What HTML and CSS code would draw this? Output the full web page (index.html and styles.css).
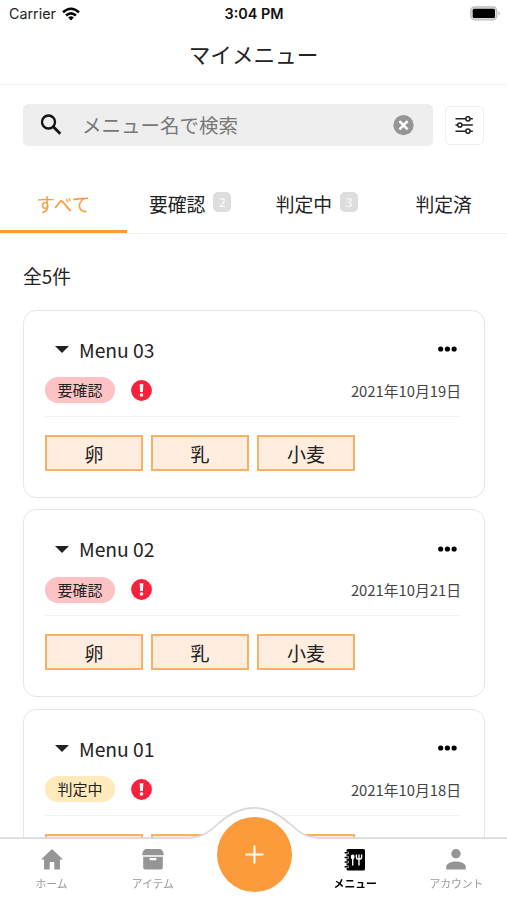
FILE: index.html
```html
<!DOCTYPE html>
<html lang="ja">

<head>
    <meta charset="utf-8">
    <title>マイメニュー</title>
    <link rel="stylesheet" href="styles.css">
</head>

<body>
    <div class="status">
        <div class="carrier">
            <span>Carrier</span>
            <svg width="18" height="14" viewBox="0 0 18 14">
                <g fill="none" stroke="#000" stroke-width="2.5">
                    <path d="M1 5.2Q9 -1.8 17 5.2" />
                    <path d="M4 8.5Q9 4.2 14 8.5" />
                </g>
                <path d="M6.2 10.4Q9 8.2 11.8 10.4L9 13.4z" />
            </svg>
        </div>
        <div class="time">3:04 PM</div>
        <div class="battery">
            <svg width="31" height="15" viewBox="0 0 31 15">
                <rect x=".8" y=".8" width="26" height="13" rx="4" fill="#ddd" stroke="#bbb" stroke-width="1.2" />
                <rect x="2.7" y="2.7" width="22.3" height="9.2" rx="1.5" />
                <path d="M28.5 5Q31 7.3 28.5 9.6z" fill="#b5b5b5" />
            </svg>
        </div>
    </div>

    <h1 class="title">マイメニュー</h1>

    <div class="search-row">
        <div class="search">
            <svg class="search-icon" width="22" height="22" viewBox="0 0 22 22" fill="none" stroke="#111" stroke-width="2.3">
                <circle cx="8.5" cy="8" r="6.5" />
                <path d="M13 12.5L20.3 19.8" stroke-width="2.8" />
            </svg>
            <span class="placeholder">メニュー名で検索</span>
            <svg width="21" height="21" viewBox="0 0 21 21">
                <circle cx="10.5" cy="10.2" r="10.1" fill="#959595" />
                <path d="M6.4 6.1L14.6 14.3M14.6 6.1L6.4 14.3" stroke="#fff" stroke-width="2.5" />
            </svg>
        </div>
        <div class="filter">
            <svg width="18" height="18" viewBox="0 0 18 18" fill="none" stroke="#222" stroke-width="1.5">
                <path d="M.5 2.8H10.5M15.2 2.8H17.8M.5 9H2.5M7.2 9H17.8M.5 15.2H10.5M15.2 15.2H17.8" />
                <circle cx="12.9" cy="2.8" r="2.1" />
                <circle cx="4.8" cy="9" r="2.1" />
                <circle cx="12.9" cy="15.2" r="2.1" />
            </svg>
        </div>
    </div>

    <div class="tabs">
        <div class="tab active">すべて</div>
        <div class="tab">要確認<span class="count">2</span></div>
        <div class="tab">判定中<span class="count">3</span></div>
        <div class="tab">判定済</div>
    </div>

    <div class="list">
        <p class="total">全5件</p>

        <div class="card">
            <div class="card-head">
                <span class="arrow"></span>
                <span class="name">Menu 03</span>
                <svg class="more" width="19" height="6" viewBox="0 0 19 6"><circle cx="2.7" cy="3" r="2.6" /><circle cx="9.4" cy="3" r="2.6" /><circle cx="16.1" cy="3" r="2.6" /></svg>
            </div>
            <div class="card-info">
                <span class="badge red">要確認</span>
                <svg class="alert" width="21" height="21" viewBox="0 0 21 21"><circle cx="10.5" cy="10.5" r="10.4" fill="#f8203b" /><path d="M8.7 4.2H12.3L11.9 12H9.1z" fill="#fff" /><circle cx="10.5" cy="15" r="1.8" fill="#fff" /></svg>
                <span class="date">2021年10月19日</span>
            </div>
            <div class="chips">
                <span class="chip">卵</span>
                <span class="chip">乳</span>
                <span class="chip">小麦</span>
            </div>
        </div>

        <div class="card">
            <div class="card-head">
                <span class="arrow"></span>
                <span class="name">Menu 02</span>
                <svg class="more" width="19" height="6" viewBox="0 0 19 6"><circle cx="2.7" cy="3" r="2.6" /><circle cx="9.4" cy="3" r="2.6" /><circle cx="16.1" cy="3" r="2.6" /></svg>
            </div>
            <div class="card-info">
                <span class="badge red">要確認</span>
                <svg class="alert" width="21" height="21" viewBox="0 0 21 21"><circle cx="10.5" cy="10.5" r="10.4" fill="#f8203b" /><path d="M8.7 4.2H12.3L11.9 12H9.1z" fill="#fff" /><circle cx="10.5" cy="15" r="1.8" fill="#fff" /></svg>
                <span class="date">2021年10月21日</span>
            </div>
            <div class="chips">
                <span class="chip">卵</span>
                <span class="chip">乳</span>
                <span class="chip">小麦</span>
            </div>
        </div>

        <div class="card">
            <div class="card-head">
                <span class="arrow"></span>
                <span class="name">Menu 01</span>
                <svg class="more" width="19" height="6" viewBox="0 0 19 6"><circle cx="2.7" cy="3" r="2.6" /><circle cx="9.4" cy="3" r="2.6" /><circle cx="16.1" cy="3" r="2.6" /></svg>
            </div>
            <div class="card-info">
                <span class="badge yellow">判定中</span>
                <svg class="alert" width="21" height="21" viewBox="0 0 21 21"><circle cx="10.5" cy="10.5" r="10.4" fill="#f8203b" /><path d="M8.7 4.2H12.3L11.9 12H9.1z" fill="#fff" /><circle cx="10.5" cy="15" r="1.8" fill="#fff" /></svg>
                <span class="date">2021年10月18日</span>
            </div>
            <div class="chips">
                <span class="chip"></span>
                <span class="chip"></span>
                <span class="chip"></span>
            </div>
        </div>
    </div>

    <div class="nav">
        <!-- bar with the bump round the add button -->
        <svg class="nav-bg" width="507" height="96" viewBox="0 0 507 96">
            <path d="M-3 34.2H185C203 34.2 209 28 219 19C229 10 241 3.8 254 3.8S279 10 289 19C299 28 305 34.2 323 34.2H510V99H-3z" fill="#fff" stroke="#dadada" stroke-width="1.7" />
        </svg>
        <div class="nav-item">
            <svg width="22" height="21" viewBox="0 0 22 21" fill="#959595"><path d="M11 0L22 10.5H19V20.5H13.3V13H8.7V20.5H3V10.5H0z" /></svg>
            <span>ホーム</span>
        </div>
        <div class="nav-item">
            <svg width="22" height="21" viewBox="0 0 22 21"><path d="M3.5 0H18.5Q21.6 1.5 21.8 6.2H.2Q.4 1.5 3.5 0zM1.2 7.8H20.8V18.5Q20.8 20.5 18.8 20.5H3.2Q1.2 20.5 1.2 18.5z" fill="#959595" /><rect x="7.5" y="9" width="7" height="2.2" rx="1" fill="#fff" /></svg>
            <span>アイテム</span>
        </div>
        <div class="nav-item">
            <div class="add">
                <svg width="19" height="19" viewBox="0 0 19 19" stroke="#fff" stroke-width="2"><path d="M9.5 .5V18.5M.5 9.5H18.5" /></svg>
            </div>
        </div>
        <div class="nav-item current">
            <svg width="22" height="22" viewBox="0 0 22 22"><path d="M4 0H19.5Q21 0 21 1.5V20Q21 21.5 19.5 21.5H4Q2.5 21.5 2.5 20V1.5Q2.5 0 4 0z" /><path d="M1.5 3.9H4.6M1.5 8.5H4.6M1.5 13.1H4.6M1.5 17.7H4.6" stroke="#fff" stroke-width="2.5" /><path d="M.6 3.7H4M.6 8.4H4M.6 13.1H4M.6 17.8H4" stroke="#000" stroke-width="1.5" /><ellipse cx="8.7" cy="8" rx="1.9" ry="2.4" fill="#fff" /><path d="M8.7 8V16.5M15 10V16.5M12.4 5.4V8Q12.4 10.2 15 10.2Q17.6 10.2 17.6 8V5.4M15 5.4V10" fill="none" stroke="#fff" stroke-width="1.4" /></svg>
            <span>メニュー</span>
        </div>
        <div class="nav-item">
            <svg width="22" height="21" viewBox="0 0 22 21" fill="#959595"><circle cx="11" cy="4.7" r="4.7" /><path d="M1.2 20.5V18C1.2 14 7 12.4 11 12.4S20.8 14 20.8 18V20.5z" /></svg>
            <span>アカウント</span>
        </div>
    </div>
</body>

</html>
```
FILE: styles.css
```css
* {
    box-sizing: border-box;
}

body {
    margin: 0;
    height: 900px;
    overflow: hidden;
    background: #fff;
    color: #222;
    font-family: "Noto Sans CJK JP", sans-serif;
}

svg {
    display: block;
    flex: none;
}

/* status bar */
.status {
    display: grid;
    grid-template-columns: 1fr auto 1fr;
    align-items: center;
    height: 27px;
    padding: 0 6px 0 7px;
    font-family: Inter, "Liberation Sans", sans-serif;
    font-size: 14.3px;
    color: #222;
}

.carrier {
    display: flex;
    align-items: center;
    gap: 6px;
    padding-left: 2px;
}

.time {
    font-weight: 600;
    color: #111;
    font-size: 14.4px;
}

.battery {
    display: flex;
    justify-content: flex-end;
}

.title {
    margin: 0;
    height: 58px;
    line-height: 54px;
    border-bottom: 1px solid #f0f0f0;
    text-align: center;
    font-size: 21.6px;
    font-weight: 400;
}

/* search */
.search-row {
    display: flex;
    align-items: center;
    gap: 12px;
    padding: 19px 23px 0;
}

.search {
    flex: 1;
    display: flex;
    align-items: center;
    height: 42px;
    padding: 0 19px 0 17px;
    border-radius: 5px;
    background: #eee;
}

.placeholder {
    flex: 1;
    margin-left: 20px;
    line-height: 42px;
    font-size: 19.5px;
    color: #777;
}

.filter {
    display: flex;
    align-items: center;
    justify-content: center;
    width: 39px;
    height: 39px;
    padding-right: 2px;
    border: 1px solid #eee;
    border-radius: 5px;
}

/* tabs */
.tabs {
    display: flex;
    height: 60px;
    margin-top: 28px;
    border-bottom: 1px solid #f0f0f0;
}

.tab {
    flex: 1;
    display: flex;
    justify-content: center;
    height: 59px;
    line-height: 59px;
    font-size: 18.8px;
}

.tab.active {
    color: #fb9b3c;
    border-bottom: 3px solid #fb9b3c;
}

.count {
    width: 18px;
    height: 20px;
    margin: 18px 0 0 8px;
    border-radius: 5px;
    background: #ddd;
    color: #fff;
    font-size: 12px;
    line-height: 20px;
    text-align: center;
}

/* list */
.list {
    padding: 0 22px 0 23px;
}

.total {
    margin: 0;
    padding-top: 28px;
    height: 75.5px;
    line-height: 28px;
    font-size: 18.8px;
}

.card {
    height: 188px;
    margin-bottom: 11.5px;
    padding: 24px 23px 0 21px;
    border: 1.5px solid #e6e6e6;
    border-radius: 13px;
}

.card-head {
    display: flex;
    align-items: center;
    height: 30px;
    padding-left: 10px;
}

.arrow {
    border: 7px solid transparent;
    border-top-color: #222;
    border-bottom: 0;
}

.name {
    flex: 1;
    margin-left: 10px;
    line-height: 30px;
    font-size: 19.3px;
}

.more {
    margin: 0 4px 1px 0;
}

.card-info {
    display: flex;
    align-items: center;
    height: 52px;
    border-bottom: 1px solid #f3f3f3;
}

.badge {
    width: 70px;
    height: 26px;
    border-radius: 13px;
    line-height: 26px;
    font-size: 15px;
    text-align: center;
}

.red {
    background: #ffc2c4;
}

.yellow {
    background: #ffeabb;
}

.alert {
    margin-left: 16px;
}

.date {
    margin-left: auto;
    font-size: 14.8px;
    color: #444;
}

.chips {
    display: flex;
    gap: 8px;
    margin-top: 18px;
}

.chip {
    width: 98px;
    height: 36px;
    border: 1.5px solid #f8b065;
    border-width: 2px;
    background: #ffeee0;
    line-height: 33px;
    font-size: 19px;
    text-align: center;
}

/* bottom navigation, lies over the list */
.nav {
    position: fixed;
    left: 0;
    right: 0;
    bottom: 0;
    height: 96px;
    padding: 45px 0 0 1px;
    display: flex;
}

.nav-bg {
    position: absolute;
    left: 0;
    top: 0;
}

.nav-item {
    position: relative;
    flex: 1;
    display: flex;
    flex-direction: column;
    align-items: center;
    font-size: 10.8px;
    line-height: 16px;
    color: #999;
}

.nav-item span {
    margin-top: 5px;
    white-space: nowrap;
}

.nav-item.current {
    color: #000;
    font-weight: 700;
}

.current span {
    margin-top: 4px;
}

.add {
    display: flex;
    align-items: center;
    justify-content: center;
    width: 75px;
    height: 75px;
    margin-top: -32px;
    border-radius: 50%;
    background: #fb9b3c;
}
```
